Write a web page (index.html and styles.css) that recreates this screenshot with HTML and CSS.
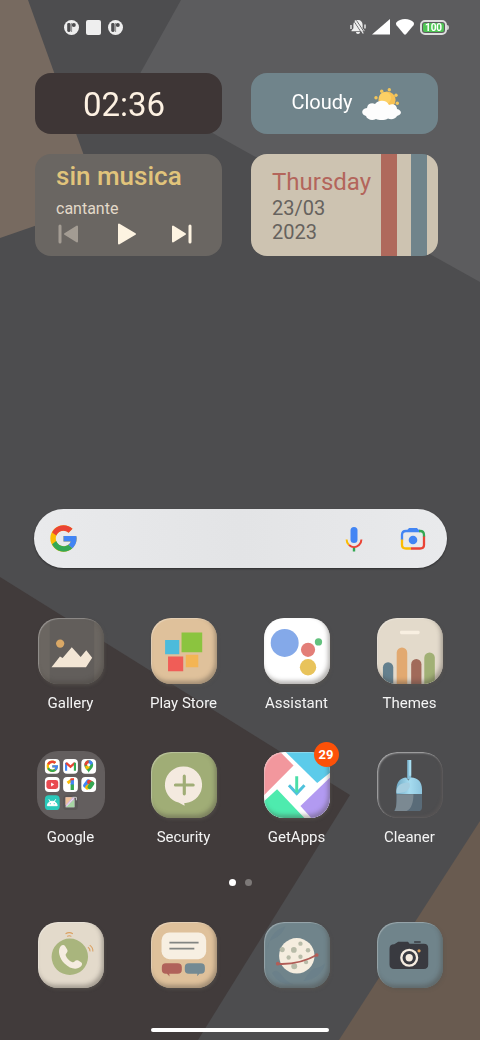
FILE: index.html
```html
<!DOCTYPE html>
<html lang="en">
<head>
<meta charset="utf-8">
<meta name="viewport" content="width=device-width, initial-scale=1">
<title>Home screen</title>
<link rel="stylesheet" href="styles.css">
</head>
<body>
<svg class="wallpaper" viewBox="0 0 480 1040" preserveAspectRatio="none" aria-hidden="true">
	<rect width="480" height="1040" fill="#4d4d4f"/>
	<path d="M0 0h28l73 203L0 238z" fill="#776a60"/>
	<path d="M181 0h299v282L132 88z" fill="#5c5c5e"/>
	<path d="M0 577l350 218-152 245H0z" fill="#413b3b"/>
	<path d="M480 821v219H339z" fill="#695b50"/>
</svg>

<header class="status">
	<div class="status-left">
		<svg width="15" height="15" viewBox="0 0 15 15"><circle cx="7.5" cy="7.5" r="7.5" fill="#eee"/><rect x="3.2" y="3" width="3.400" height="9" rx="1.400" fill="#4d4d4f"/><circle cx="9.800" cy="5" r="2" fill="#4d4d4f"/><path d="M7.600 3v9" stroke="#4d4d4f" stroke-width=".6"/></svg>
		<svg width="15" height="15" viewBox="0 0 15 15"><rect width="15" height="15" rx="2" fill="#eee"/></svg>
		<svg width="15" height="15" viewBox="0 0 15 15"><circle cx="7.5" cy="7.5" r="7.5" fill="#eee"/><rect x="3.2" y="3" width="3.400" height="9" rx="1.400" fill="#4d4d4f"/><circle cx="9.800" cy="5" r="2" fill="#4d4d4f"/><path d="M7.600 3v9" stroke="#4d4d4f" stroke-width=".6"/></svg>
	</div>
	<div class="status-right">
		<svg width="16" height="16" viewBox="0 0 16 16"><path d="M8 1c3 0 4.600 2 4.600 5v3.200L14.500 11.500v.7h-13v-.7l1.900-2.300V6C3.400 3 5 1 8 1zM6 13h4c0 1.300-.8 2-2 2s-2-.7-2-2z" fill="#eee"/><path d="M1 6v4M15 5.500v4" stroke="#eee" stroke-width="1.400"/><path d="M3.500 1.500l8.500 13M6.500 1.500l8 12" stroke="#5c5c5e" stroke-width=".9"/><path d="M5 1.500l8.300 13" stroke="#eee" stroke-width="1.200"/></svg>
		<svg width="18" height="16" viewBox="0 0 18 16"><path d="M18 0v15.500H0z" fill="#fff"/></svg>
		<svg width="18" height="16" viewBox="0 0 18 16"><path d="M9 0c3.600 0 6.800 1.200 8.700 3.600.4.600.4 1.800-.2 2.600L10 15.200c-.6.600-1.400.6-2 0L.5 6.200C-.1 5.400-.1 4.200.3 3.600 2.200 1.200 5.400 0 9 0z" fill="#fff"/></svg>
		<div class="battery"><span>100</span></div>
	</div>
</header>

<main>
	<section class="widgets">
		<div class="card clock"><time>02:36</time></div>
		<div class="card weather">
			<span>Cloudy</span>
			<svg width="42" height="36" viewBox="0 0 42 36">
				<g fill="#f3c65b"><circle cx="15" cy="11.700" r="1.700"/><circle cx="20.700" cy="5.300" r="1.700"/><circle cx="28.300" cy="3.700" r="1.700"/><circle cx="35" cy="9.300" r="1.700"/><circle cx="36.300" cy="17.300" r="1.700"/></g>
				<circle cx="26" cy="14" r="8.600" fill="#f8c254"/><circle cx="24" cy="12" r="6" fill="#fcd065"/>
				<path d="M5 30c-5-1-5.500-7 1-8 .5-4.500 5-5.500 8-4 4-5 12-4 14 1 5-2 8 1 8 4 5 1 5.500 6 0 7-1 3-6 4-9 2.500-3 2-9 2-12 .5-4 2-9 .500-10-3z" fill="#fdfdfd"/>
			</svg>
		</div>
		<div class="card music">
			<div class="song">sin musica</div>
			<div class="artist">cantante</div>
			<div class="controls">
				<button aria-label="Previous"><svg width="24" height="24" viewBox="0 0 24 24"><path d="M4 4v16" stroke="#a39c93" stroke-width="3" stroke-linecap="round"/><path d="M21 4.500v15L9 12z" fill="#a39c93" stroke="#a39c93" stroke-width="2" stroke-linejoin="round"/></svg></button>
				<button aria-label="Play"><svg width="24" height="24" viewBox="0 0 24 24"><path d="M6 2.500v19L22 12z" fill="#fdf3e1" stroke="#fdf3e1" stroke-width="2" stroke-linejoin="round"/></svg></button>
				<button aria-label="Next"><svg width="24" height="24" viewBox="0 0 24 24"><path d="M3 4.500v15L15 12z" fill="#fdf3e1" stroke="#fdf3e1" stroke-width="2" stroke-linejoin="round"/><path d="M20 4v16" stroke="#fdf3e1" stroke-width="3" stroke-linecap="round"/></svg></button>
			</div>
		</div>
		<div class="card date">
			<div class="day">Thursday</div>
			<div>23/03</div>
			<div>2023</div>
		</div>
	</section>

	<form class="search">
		<svg width="27" height="27" viewBox="3 3 42 42"><use href="#g-logo"/></svg>
		<input type="search" aria-label="Search">
		<button type="button" aria-label="Voice search"><svg width="28" height="28" viewBox="0 0 28 28"><rect x="10.500" y="2" width="7" height="16" rx="3.500" fill="#4285f4"/><path d="M14 22v4.500" stroke="#34a853" stroke-width="2.400"/><path d="M6.600 14.500c0 2.400.9 4.200 2.400 5.500" fill="none" stroke="#fbbc04" stroke-width="2"/><path d="M9 20c3 2.700 7 2.700 10 0 1.500-1.300 2.400-3.100 2.400-5.500" fill="none" stroke="#ea4335" stroke-width="2"/></svg></button>
		<button type="button" aria-label="Lens"><svg width="28" height="28" viewBox="0 0 28 28"><g fill="none" stroke-width="2.300"><path d="M3 15V10q0-4 4-4h14" stroke="#4285f4"/><path d="M20 6h1q4 0 4 4v2" stroke="#34a853"/><path d="M25 11.500V20q0 3.500-4 3.500h-9" stroke="#ea4335"/><path d="M3 14.500V20q0 3.500 4 3.500h5" stroke="#fbbc04"/></g><path d="M8 5.500l2-2.500h8l2 2.500z" fill="#4285f4"/><circle cx="14" cy="15" r="4.300" fill="#4285f4"/></svg></button>
	</form>

	<nav class="apps" aria-label="Apps">
		<a href="#gallery"><span class="tile gallery"><svg viewBox="0 0 67 67"><path d="M12 0h45v67H12z" fill="#625e5b"/><circle cx="22.500" cy="26" r="4.200" fill="#d9a866"/><path d="M13.700 50L22.300 39l2.700 1.700 9.300-11 9 10 5.700-7 6 7.600-6.300 9.700z" fill="#f3e6d5"/></svg></span>Gallery</a>
		<a href="#play"><span class="tile sand"><svg viewBox="0 0 67 67"><path d="M14.300 22.300h14.400v14.400H14.300z" fill="#4cbbdb"/><path d="M31 14.700h21v20H31z" fill="#8bc43f"/><path d="M17.300 39h15.400v15H17.300z" fill="#f05d57"/><path d="M35.300 37.300H48V50H35.300z" fill="#f4b554"/></svg></span>Play Store</a>
		<a href="#assistant"><span class="tile white"><svg viewBox="0 0 67 67"><circle cx="21" cy="25.300" r="14.200" fill="#84a9e9"/><circle cx="44.700" cy="32.300" r="7.200" fill="#e37e78"/><circle cx="55.300" cy="24.300" r="3.700" fill="#63c17e"/><circle cx="44.700" cy="50" r="8.300" fill="#e8c35b"/></svg></span>Assistant</a>
		<a href="#themes"><span class="tile cream"><svg viewBox="0 0 67 67"><rect x="23.300" y="13" width="20" height="3.600" rx="1.500" fill="#f8efe1"/><rect x="6" y="45" width="10.500" height="40" rx="5.200" fill="#64808e"/><rect x="20" y="30" width="10.700" height="50" rx="5.300" fill="#e2a970"/><rect x="34.700" y="41.700" width="10.400" height="40" rx="5.200" fill="#a16a5a"/><rect x="48" y="35" width="10.700" height="50" rx="5.300" fill="#a1b075"/></svg></span>Themes</a>
		<a href="#google"><span class="tile folder"><svg viewBox="0 0 67 67">
			<g fill="#fff"><rect x="7" y="7" width="15" height="15" rx="4"/><rect x="25.500" y="7" width="15" height="15" rx="4"/><rect x="44" y="7" width="15" height="15" rx="4"/><rect x="7" y="25.500" width="15" height="15" rx="4"/><rect x="25.500" y="25.500" width="15" height="15" rx="4"/><rect x="44" y="25.500" width="15" height="15" rx="4"/></g>
			<svg x="8.500" y="8.500" width="12" height="12" viewBox="3 3 42 42"><g id="g-logo"><path fill="#fbbc05" d="M43.600 20H24v8.500h11.300C33.700 33.100 29.200 36 24 36c-6.600 0-12-5.400-12-12s5.400-12 12-12c3.100 0 5.800 1.200 8 3l6-6C34.300 5.500 29.500 3.500 24 3.500 12.700 3.500 3.500 12.700 3.500 24S12.700 44.500 24 44.500 44.500 35.300 44.500 24c0-1.400-.3-2.700-.9-4z"/><path fill="#ea4335" d="M6.300 14.700l6.600 4.800C14.700 15.100 19 12 24 12c3.100 0 5.800 1.200 8 3l6-6C34.300 5.500 29.500 3.500 24 3.500c-7.800 0-14.400 4.500-17.700 11.200z"/><path fill="#34a853" d="M24 44.500c5.300 0 10.100-2 13.700-5.300l-6.300-5.500C29.300 35.200 26.700 36 24 36c-5.200 0-9.600-3.300-11.300-8l-6.500 5C9.500 39.800 16.200 44.500 24 44.500z"/><path fill="#4285f4" d="M44 20H24v8.500h11.300c-.8 2.200-2.200 4-4 5.200l6.400 5.500C37.200 39.600 44.500 34.500 44.500 24c0-1.400-.2-2.700-.5-4z"/></g></svg>
			<path d="M28.500 19v-8" stroke="#4285f4" stroke-width="2.200"/><path d="M28.500 11l4.500 4 4.500-4" fill="none" stroke="#ea4335" stroke-width="2.400"/><path d="M37.500 19v-8" stroke="#34a853" stroke-width="2.200"/>
			<path d="M51.500 21c-1-3-4.500-4-4.500-8a4.500 4.500 0 0 1 9 0c0 4-3.500 5-4.500 8z" fill="#34a853"/><path d="M47.300 14a4.500 4.500 0 0 1 4.200-5.500v4z" fill="#ea4335"/><path d="M51.500 8.500a4.500 4.500 0 0 1 4.300 3l-4.300 3z" fill="#4285f4"/><path d="M47.500 15l4-2 1 3-3 2z" fill="#fbbc04"/><circle cx="51.500" cy="13" r="1.600" fill="#fff"/>
			<rect x="8.500" y="28.500" width="12" height="9" rx="2.500" fill="#e94a50"/><path d="M13.300 31v4l3.200-2z" fill="#fff"/>
			<path d="M30 31.500l5-3.500" stroke="#fbbc04" stroke-width="3"/><path d="M34.800 27.500v6" stroke="#4285f4" stroke-width="3.400"/><path d="M34.800 33v5.500" stroke="#34a853" stroke-width="3.400"/><path d="M33 28l3.500-.5" stroke="#ea4335" stroke-width="2"/>
			<g stroke-width="4.500" stroke-linecap="round"><path d="M48 34l3-4" stroke="#4285f4"/><path d="M52 30.500l2 1" stroke="#ea4335"/><path d="M50 36l1-1" stroke="#fbbc04"/><path d="M52.500 35.500l2.500-3.500" stroke="#34a853"/></g>
			<rect x="7" y="44" width="15" height="15" rx="4" fill="#2ac9ba"/><path d="M9.500 54.500c.4-6 9.600-6 10 0zM11 48l2 3M18 48l-2 3" fill="#fff" stroke="#fff"/><path d="M12 52.500h1M16 52.500h1" stroke="#2ac9ba"/>
			<rect x="25.500" y="44" width="15" height="15" rx="4" fill="#5a5655"/><path d="M28 46h9v10h-9z" fill="#d8b8dd"/><path d="M28 46h7l-7 8z" fill="#efc39a"/><path d="M28 56l9-8v8z" fill="#a7d6a4"/><path d="M29 55l7-8" stroke="#e9e3ee"/><path d="M35 46h4v3" fill="none" stroke="#ccc"/>
		</svg></span>Google</a>
		<a href="#security"><span class="tile green"><svg viewBox="0 0 67 67"><path d="M33.300 14.800a18.500 18.500 0 0 1 2 36.900l-1.500 0 .3 2.800L28 51.200a18.500 18.500 0 0 1 5.300-36.400z" fill="#f4eadf"/><path d="M24.800 33.500h18M33.800 24.500v18" stroke="#a0ad76" stroke-width="3.200" stroke-linecap="round"/></svg></span>Security</a>
		<a href="#getapps"><span class="tile white"><svg viewBox="0 0 67 67"><path d="M0 0h16.500L30 13.700 0 44z" fill="#f2979d"/><path d="M22 0h45v21L54 31.500z" fill="#5ccbea"/><path d="M67 26v41H48L37 54.700z" fill="#b29af1"/><path d="M13.300 37.700L41 67H0V50z" fill="#4eebae"/><path d="M25.300 33.700l7.900 8.500 7.900-8.500" fill="none" stroke="#4fc2dc" stroke-width="3"/><path d="M33.200 24.700V41" stroke="#4adea8" stroke-width="3"/></svg></span><b class="badge">29</b>GetApps</a>
		<a href="#cleaner"><span class="tile clear"><svg viewBox="0 0 67 67"><defs><linearGradient id="brush" x1="0" x2="1"><stop offset="0" stop-color="#6fa9c4"/><stop offset=".5" stop-color="#a6dcf0"/><stop offset="1" stop-color="#8cc4dd"/></linearGradient></defs><path d="M30.700 8h4v20h-4z" fill="#86bfd8"/><path d="M32.700 8h2v16h-2z" fill="#aadff2"/><path d="M19.700 43v-5c0-7 4-12 10-12l2 3 3-3c7 0 11 5 11 12v5z" fill="url(#brush)"/><path d="M19.700 42c-1-7 4-11 13-11 3 6-3 11-13 11z" fill="#a5cee0"/><path d="M19.700 43h26v13c0 2.500-1.500 4-4 4H17.300c2-3 2.400-5 2.400-8z" fill="#596b78"/><path d="M20 43h17c0 8-2 15-7 17H18c2-4 2-9 2-17z" fill="#7b8992"/></svg></span>Cleaner</a>
	</nav>

	<div class="pages"><i class="on"></i><i></i></div>
</main>

<nav class="apps dock" aria-label="Dock">
	<a href="#phone" aria-label="Phone"><span class="tile cream"><svg viewBox="0 0 67 67"><circle cx="32.300" cy="35.300" r="18.500" fill="#a9b57d"/><path d="M23 24.500c1.500-1.500 3.600-1.500 4.600 0l2 3.500c.8 1.500.3 2.700-.7 3.700-1 .9-1 1.700-.5 2.800 1.200 2.800 3.300 4.900 6 6 1 .5 1.900.4 2.700-.5 1-1.100 2.400-1.500 3.800-.8l2.800 1.700c1.500 1 1.300 2.700 0 4-4 4-11 3-16.500-2.500S19.500 28.500 23 24.500z" fill="#f5ece0"/><path d="M28 12q3.700-2.400 7.400 0M29.500 14.600q2.200-1.200 4.400 0M52.500 23.500q3.500 2.400 3.200 6.500M50.700 25.500q2.300 1.600 2.100 4.300" fill="none" stroke="#dba060" stroke-width="1.100"/></svg></span></a>
	<a href="#messages" aria-label="Messages"><span class="tile sand"><svg viewBox="0 0 67 67"><rect x="10.700" y="10.700" width="45.300" height="27" rx="8" fill="#f7efe2"/><path d="M18.700 21h29.600M18.700 27H44" stroke="#828582" stroke-width="1.800"/><path d="M15 42h12q4.300 0 4.300 4v2.500q0 4-4.300 4H18.500l.4 2.700-2.700-2.700H15q-4 0-4-4V46q0-4 4-4z" fill="#b0625a"/><path d="M38.300 42h12.400q4 0 4 4v2.500q0 4-4 4h-1.500L46.800 55l.3-2.500h-8.800q-4 0-4-4V46q0-4 4-4z" fill="#748a93"/></svg></span></a>
	<a href="#browser" aria-label="Browser"><span class="tile slate"><svg viewBox="0 0 67 67"><path d="M4 28q1-18 18-24-4 10-12 13T4 28zM40 60q18-2 22-18-6 5-10 5t-12 13zM8 52q4-6 10 2t12 9q-14 2-22-11z" fill="#6b808a"/><circle cx="33.300" cy="34.300" r="18" fill="#f5eddf"/><g fill="#b8bba8"><circle cx="18.500" cy="28" r="2.600"/><circle cx="30.300" cy="28.300" r="2.900"/><circle cx="37" cy="22" r="2.200"/><circle cx="44.700" cy="28.700" r="2.300"/><circle cx="25" cy="36" r="2.200"/><circle cx="37" cy="35.300" r="2.200"/><circle cx="30.700" cy="45" r="3"/><circle cx="42.700" cy="40.700" r="2.200"/></g><path d="M13 42.500q22 1.500 41.500-9.500" fill="none" stroke="#b15d57" stroke-width="2"/><circle cx="14" cy="42.300" r="1.900" fill="#b15d57"/><circle cx="53.500" cy="33.500" r="1.900" fill="#b15d57"/></svg></span></a>
	<a href="#camera" aria-label="Camera"><span class="tile slate"><svg viewBox="0 0 67 67"><path d="M17.500 22.700l2.500-1.700 1.500-1h10l1.500 2.200h14.500q4.500 0 4.500 4.500v16.500q0 4.500-4.500 4.500h-30q-4.800 0-4.800-4.500V27.200q0-4.500 4.800-4.500z" fill="#393a40"/><path d="M37.700 20.300h6.600" stroke="#393a40" stroke-width="1.600"/><circle cx="32.700" cy="36.300" r="8" fill="#393a40" stroke="#f5ece0" stroke-width="2.400"/><circle cx="32.700" cy="36.300" r="3.700" fill="#f5ece0"/><circle cx="42.700" cy="29.300" r="1.600" fill="#e0a562"/></svg></span></a>
</nav>

<div class="homebar"></div>
</body>
</html>
```
FILE: styles.css
```css
*{box-sizing:border-box;}
body{margin:0;min-height:100vh;display:flex;flex-direction:column;background-color:#4d4d4f;color:#f4f4f4;font-family:Roboto,"Liberation Sans",sans-serif;}
svg{display:block;}
button{border:0;padding:0;background:none;cursor:pointer;}
.wallpaper{position:fixed;top:0;left:0;width:100%;height:100%;z-index:-1;}

.status{display:flex;justify-content:space-between;align-items:center;padding:19px 31px 0 64px;}
.status-left,.status-right{display:flex;align-items:center;gap:7px;}
.status-right{gap:6px;}
.battery{display:flex;align-items:center;}
.battery span{width:27px;height:15px;border:2px solid #ddd;border-radius:5px;background:#4fc454 content-box;padding:1px;color:#fff;font-size:10px;font-weight:bold;line-height:10px;text-align:center;}
.battery:after{content:"";width:2px;height:5px;background-color:#ccc;border-radius:0 2px 2px 0;}

main{flex:1;display:flex;flex-direction:column;}
.widgets{display:grid;grid-template-columns:1fr 1fr;gap:20px 29px;padding:38px 42px 0 35px;}
.card{border-radius:16px;}
.clock,.weather{display:flex;align-items:center;justify-content:center;height:61px;}
.clock{background-color:#3e3636;color:#fdf1e2;font-size:33px;padding:2px 9px 0 0;}
.weather{background-color:#70848b;color:#fff;font-size:20px;gap:8px;padding:0 0 4px 5px;}
.weather svg{margin-top:4px;}
.music{background-color:#6a6662;padding:7px 28px 9px 21px;}
.song{color:#e1c47b;font-size:26px;font-weight:500;line-height:30px;}
.artist{color:#e3d9c9;font-size:16px;line-height:20px;margin:8px 0 3px;}
.controls{display:flex;justify-content:space-between;}
.date{padding:14px 21px 12px;color:#66625e;font-size:20px;line-height:24px;background:linear-gradient(to left,#cdc3b1 11px,#70848b 11px,#70848b 27px,#cdc3b1 27px,#cdc3b1 41px,#af695c 41px,#af695c 57px,#cdc3b1 57px);}
.day{color:#b3655b;font-size:24px;line-height:28px;}

.search{display:flex;align-items:center;height:59px;margin:auto 33px 0 34px;padding:0 20px 0 16px;border-radius:30px;background:linear-gradient(to right,#e9eaec,#e3e4e6 50%,#e9eaec);box-shadow:0 1px 2px rgba(0,0,0,.4);}
.search input{flex:1;min-width:0;border:0;outline:0;background:none;font-size:18px;}
.search button+button{margin-left:31px;}

.apps{display:grid;grid-template-columns:repeat(4,1fr);row-gap:39px;padding:50px 14px 0;}
.apps a{position:relative;display:flex;flex-direction:column;align-items:center;color:#f4f4f4;font-size:15px;line-height:20px;text-decoration:none;}
.tile{position:relative;width:66px;height:66px;margin-bottom:9px;border-radius:20px;overflow:hidden;box-shadow:1px 2px 3px rgba(90,85,80,.5);}
.tile:after{content:"";position:absolute;top:0;right:0;bottom:0;left:0;border-radius:20px;box-shadow:inset 1px 1px 1px rgba(255,255,255,.3),inset -2px -3px 4px rgba(70,65,60,.4);}
.gallery{background-color:#6b6661;}
.sand{background-color:#dfc19b;}
.white{background-color:#fff;}
.cream{background-color:#e3dacb;}
.green{background-color:#a0ad76;}
.slate{background-color:#70848b;}
.folder{background-color:#635e5e;box-shadow:0 0 0 1px #635e5e;}
.folder:after{display:none;}
.clear{box-shadow:none;}
.clear:after{box-shadow:inset 1px 1px 2px rgba(255,255,255,.6),inset -2px -2px 3px rgba(110,100,95,.3);}
.badge{position:absolute;top:-10px;left:50%;width:25px;height:25px;margin-left:17px;border-radius:50%;background-color:#fd5108;color:#fff;font-size:13px;line-height:25px;text-align:center;}

.pages{display:flex;justify-content:center;gap:9px;padding-top:32px;}
.pages i{width:7px;height:7px;border-radius:50%;background-color:#7d7978;}
.pages .on{background-color:#fff;}
.dock{padding-top:36px;}
.dock .tile{margin-bottom:0;}
.homebar{width:37%;height:4px;margin:40px auto 8px;border-radius:2px;background-color:#fff;}
```
